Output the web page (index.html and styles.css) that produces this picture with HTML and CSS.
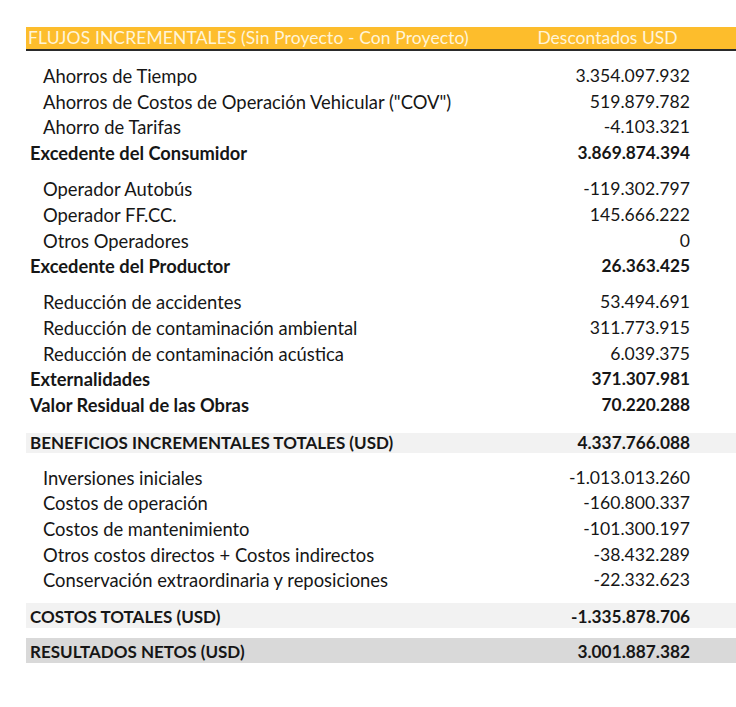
FILE: index.html
```html
<!DOCTYPE html>
<html lang="es">
<head>
<meta charset="utf-8">
<title>Flujos incrementales</title>
<link rel="stylesheet" href="styles.css">
</head>
<body>
<div class="sheet">
  <div class="head">
    <div class="head-label">FLUJOS INCREMENTALES (Sin Proyecto - Con Proyecto)</div>
    <div class="head-value">Descontados USD</div>
  </div>

  <div class="group g1">
    <div class="row sub"><span class="lbl">Ahorros de Tiempo</span><span class="val">3.354.097.932</span></div>
    <div class="row sub"><span class="lbl">Ahorros de Costos de Operación Vehicular ("COV")</span><span class="val">519.879.782</span></div>
    <div class="row sub"><span class="lbl">Ahorro de Tarifas</span><span class="val">-4.103.321</span></div>
    <div class="row total"><span class="lbl">Excedente del Consumidor</span><span class="val">3.869.874.394</span></div>
  </div>

  <div class="group g2">
    <div class="row sub"><span class="lbl">Operador Autobús</span><span class="val">-119.302.797</span></div>
    <div class="row sub"><span class="lbl">Operador FF.CC.</span><span class="val">145.666.222</span></div>
    <div class="row sub"><span class="lbl">Otros Operadores</span><span class="val">0</span></div>
    <div class="row total"><span class="lbl">Excedente del Productor</span><span class="val">26.363.425</span></div>
  </div>

  <div class="group g3">
    <div class="row sub"><span class="lbl">Reducción de accidentes</span><span class="val">53.494.691</span></div>
    <div class="row sub"><span class="lbl">Reducción de contaminación ambiental</span><span class="val">311.773.915</span></div>
    <div class="row sub"><span class="lbl">Reducción de contaminación acústica</span><span class="val">6.039.375</span></div>
    <div class="row total"><span class="lbl">Externalidades</span><span class="val">371.307.981</span></div>
    <div class="row total"><span class="lbl">Valor Residual de las Obras</span><span class="val">70.220.288</span></div>
  </div>

  <div class="row band band-benef"><span class="lbl">BENEFICIOS INCREMENTALES TOTALES (USD)</span><span class="val">4.337.766.088</span></div>

  <div class="group g5">
    <div class="row sub"><span class="lbl">Inversiones iniciales</span><span class="val">-1.013.013.260</span></div>
    <div class="row sub"><span class="lbl">Costos de operación</span><span class="val">-160.800.337</span></div>
    <div class="row sub"><span class="lbl">Costos de mantenimiento</span><span class="val">-101.300.197</span></div>
    <div class="row sub"><span class="lbl">Otros costos directos + Costos indirectos</span><span class="val">-38.432.289</span></div>
    <div class="row sub"><span class="lbl">Conservación extraordinaria y reposiciones</span><span class="val">-22.332.623</span></div>
  </div>

  <div class="row band band-costos"><span class="lbl">COSTOS TOTALES (USD)</span><span class="val">-1.335.878.706</span></div>
  <div class="row band band-result"><span class="lbl">RESULTADOS NETOS (USD)</span><span class="val">3.001.887.382</span></div>
</div>
</body>
</html>
```

FILE: styles.css
```css
html, body {
  margin: 0;
  padding: 0;
  background: #ffffff;
}

body {
  font-family: Lato, "Open Sans", "Liberation Sans", sans-serif;
  color: #161616;
  font-size: 17px;
}

.sheet {
  margin-left: 26px;
  width: 710px;
  padding-top: 27px;
}

.head {
  display: grid;
  grid-template-columns: 1fr 165px 46px;
  height: 22px;
  align-items: center;
  background: #fdbd2c;
  border-bottom: 2px solid #2a2a2a;
  color: #fff4d8;
  font-size: 17.5px;
  line-height: 22px;
}

.head-label {
  padding-left: 2px;
  white-space: nowrap;
  letter-spacing: 0.1px;
}

.head-value {
  text-align: center;
  white-space: nowrap;
}

.group {
  display: flex;
  flex-direction: column;
}

.g1 { margin-top: 12px; }
.g2 { margin-top: 10.7px; }
.g3 { margin-top: 10.2px; }
.g5 { margin-top: 12px; }

.row {
  display: grid;
  grid-template-columns: 1fr 165px;
  padding-right: 46px;
  height: 25.7px;
  align-items: center;
  white-space: nowrap;
  line-height: 20px;
}

.row .val {
  text-align: right;
}

.sub .lbl {
  padding-left: 17px;
  font-size: 18.4px;
}

.sub .val {
  font-size: 17.6px;
}

.total,
.band {
  font-weight: 700;
}

.total .lbl,
.band .lbl {
  padding-left: 4px;
}

.total .lbl {
  font-size: 18.3px;
}

.band .lbl {
  font-size: 17px;
}

.total .val,
.band .val {
  font-size: 17.3px;
}

.band-benef {
  margin-top: 15px;
  height: 20px;
  background: #f2f2f2;
}

.band-costos {
  margin-top: 9.35px;
  height: 25px;
  padding-top: 4px;
  box-sizing: border-box;
  background: #f2f2f2;
}

.band-result {
  margin-top: 10px;
  height: 25px;
  padding-top: 4px;
  box-sizing: border-box;
  background: #d9d9d9;
}
```
